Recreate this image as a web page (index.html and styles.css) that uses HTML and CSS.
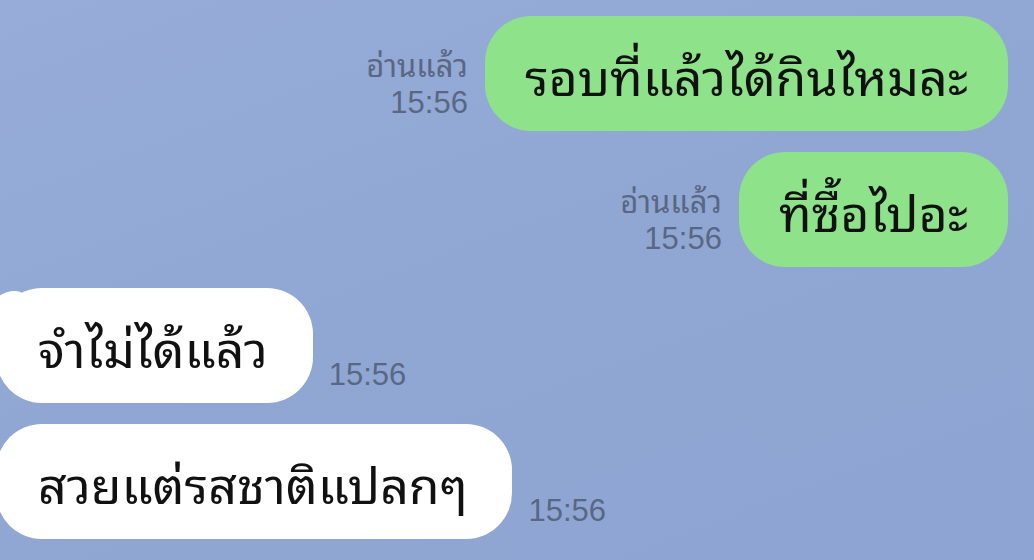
FILE: index.html
```html
<!DOCTYPE html>
<html lang="th">
<head>
<meta charset="utf-8">
<link rel="stylesheet" href="styles.css">
</head>
<body>
<div class="chat">
  <div class="row row-out">
    <div class="meta meta-out">
      <span class="read">อ่านแล้ว</span>
      <span class="time">15:56</span>
    </div>
    <div class="bubble bubble-out">รอบที่แล้วได้กินไหมละ</div>
  </div>
  <div class="row row-out">
    <div class="meta meta-out">
      <span class="read">อ่านแล้ว</span>
      <span class="time">15:56</span>
    </div>
    <div class="bubble bubble-out">ที่ซื้อไปอะ</div>
  </div>
  <div class="row row-in">
    <div class="bubble bubble-in tail">จำไม่ได้แล้ว</div>
    <div class="meta meta-in">
      <span class="time">15:56</span>
    </div>
  </div>
  <div class="row row-in">
    <div class="bubble bubble-in">สวยแต่รสชาติแปลกๆ</div>
    <div class="meta meta-in">
      <span class="time">15:56</span>
    </div>
  </div>
</div>
</body>
</html>
```

FILE: styles.css
```css
html, body {
  margin: 0;
  padding: 0;
}
body {
  width: 1034px;
  height: 560px;
  overflow: hidden;
  background: linear-gradient(160deg, #97acd8 0%, #90a7d4 45%, #8ea5d3 100%);
  font-family: "Noto Sans Thai Looped", "Noto Sans", sans-serif;
}
.chat {
  display: flex;
  flex-direction: column;
  gap: 21px;
  padding-top: 16px;
}
.row {
  display: flex;
  align-items: flex-end;
}
.row-out {
  justify-content: flex-end;
  padding-right: 26px;
  gap: 17px;
}
.row-in {
  justify-content: flex-start;
  margin-left: -4px;
  gap: 16px;
}
.bubble {
  height: 115px;
  box-sizing: border-box;
  display: flex;
  align-items: center;
  padding: 0 40px;
  border-radius: 46px;
  font-size: 50px;
  line-height: 1;
  color: #111;
  white-space: nowrap;
  position: relative;
}
.bubble-out {
  background: #8ee28a;
}
.bubble-in {
  background: #ffffff;
  padding-left: 42px;
  padding-right: 45px;
}
.tail::before {
  content: "";
  position: absolute;
  left: -2px;
  top: 3px;
  width: 34px;
  height: 26px;
  background: #ffffff;
  border-radius: 60% 40% 0 0;
}
.meta {
  display: flex;
  flex-direction: column;
  color: #5a6782;
  padding-bottom: 8px;
}
.meta-out {
  align-items: flex-end;
}
.read {
  font-size: 31px;
  line-height: 40px;
}
.time {
  font-family: "Liberation Sans", Arial, sans-serif;
  font-size: 31px;
  line-height: 40px;
}
```
